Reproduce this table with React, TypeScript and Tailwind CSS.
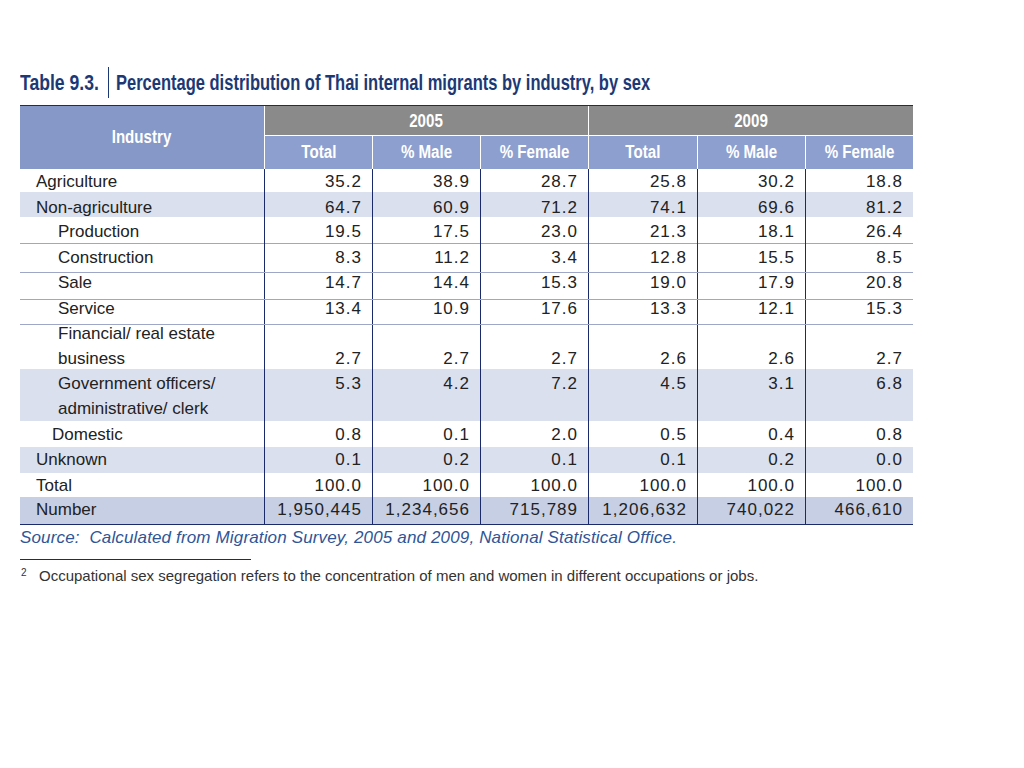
import React from 'react';

type Row = {
  label: string[];
  indent: string;
  values: string[];
  rowClass: string;
  textShift: string;
  numOnSecondLine?: boolean;
};

const rows: Row[] = [
  { label: ['Agriculture'], indent: 'pl-[16px]', values: ['35.2', '38.9', '28.7', '25.8', '30.2', '18.8'], rowClass: 'h-[23px]', textShift: 'mt-[0px]' },
  { label: ['Non-agriculture'], indent: 'pl-[16px]', values: ['64.7', '60.9', '71.2', '74.1', '69.6', '81.2'], rowClass: 'h-[25px] bg-[#dbe0ee]', textShift: 'mt-[3px]' },
  { label: ['Production'], indent: 'pl-[38px]', values: ['19.5', '17.5', '23.0', '21.3', '18.1', '26.4'], rowClass: 'h-[27px] border-b border-[#9ea7c6]', textShift: 'mt-[2px]' },
  { label: ['Construction'], indent: 'pl-[38px]', values: ['8.3', '11.2', '3.4', '12.8', '15.5', '8.5'], rowClass: 'h-[29px] border-b border-[#9ea7c6]', textShift: 'mt-[1px]' },
  { label: ['Sale'], indent: 'pl-[38px]', values: ['14.7', '14.4', '15.3', '19.0', '17.9', '20.8'], rowClass: 'h-[27px] border-b border-[#9ea7c6]', textShift: '-mt-[3px]' },
  { label: ['Service'], indent: 'pl-[38px]', values: ['13.4', '10.9', '17.6', '13.3', '12.1', '15.3'], rowClass: 'h-[25px] border-b border-[#9ea7c6]', textShift: '-mt-[4px]' },
  { label: ['Financial/ real estate', 'business'], indent: 'pl-[38px]', values: ['2.7', '2.7', '2.7', '2.6', '2.6', '2.7'], rowClass: 'h-[44px]', textShift: '-mt-[4px]', numOnSecondLine: true },
  { label: ['Government officers/', 'administrative/ clerk'], indent: 'pl-[38px]', values: ['5.3', '4.2', '7.2', '4.5', '3.1', '6.8'], rowClass: 'h-[52px] bg-[#dbe0ee]', textShift: 'mt-[2px]' },
  { label: ['Domestic'], indent: 'pl-[32px]', values: ['0.8', '0.1', '2.0', '0.5', '0.4', '0.8'], rowClass: 'h-[26px]', textShift: 'mt-[1px]' },
  { label: ['Unknown'], indent: 'pl-[16px]', values: ['0.1', '0.2', '0.1', '0.1', '0.2', '0.0'], rowClass: 'h-[26px] bg-[#dbe0ee]', textShift: 'mt-[0px]' },
  { label: ['Total'], indent: 'pl-[16px]', values: ['100.0', '100.0', '100.0', '100.0', '100.0', '100.0'], rowClass: 'h-[24px]', textShift: 'mt-[0px]' },
  { label: ['Number'], indent: 'pl-[16px]', values: ['1,950,445', '1,234,656', '715,789', '1,206,632', '740,022', '466,610'], rowClass: 'h-[27px] bg-[#c7cfe5]', textShift: 'mt-[0px]' },
];

const cols = 'grid grid-cols-[244px_108px_108px_108px_109px_108px_108px]';

// no narrow face installed, so the condensed headings are squeezed horizontally
const Narrow = ({ children, origin = 'origin-center', scale = 'scale-x-[0.84]' }: { children: React.ReactNode; origin?: string; scale?: string }) => (
  <span className={`inline-block whitespace-nowrap ${origin} ${scale}`}>{children}</span>
);

export default function App() {
  return (
    <div className="min-h-[768px] bg-white pt-[67px] pl-[20px]">
      <div className="flex h-[31px] items-center font-['Liberation_Sans',Arial,sans-serif] text-[22px] font-bold text-[#1c3975]">
        <div className="w-[88px] shrink-0">
          <Narrow origin="origin-left" scale="scale-x-[0.8]">Table 9.3.</Narrow>
        </div>
        <span className="h-[31px] w-px shrink-0 bg-[#1c3975]" />
        <div className="ml-[7px] shrink-0">
          <Narrow origin="origin-left" scale="scale-x-[0.75]">Percentage distribution of Thai internal migrants by industry, by sex</Narrow>
        </div>
      </div>

      <div className="mt-[7px] w-[893px] border-t border-[#1b2a6b]">
        <div className={`${cols} font-['Liberation_Sans',Arial,sans-serif] text-[18px] font-bold text-white`}>
          <div className="row-span-2 flex h-[63px] items-center justify-center bg-[#8598c8]">
            <Narrow>Industry</Narrow>
          </div>
          <div className="col-span-3 flex h-[30px] items-center justify-center border-b border-l border-white bg-[#8a8a8a] pt-[1px]">
            <Narrow>2005</Narrow>
          </div>
          <div className="col-span-3 flex h-[30px] items-center justify-center border-b border-l border-white bg-[#8a8a8a] pt-[1px]">
            <Narrow>2009</Narrow>
          </div>
          {['Total', '% Male', '% Female', 'Total', '% Male', '% Female'].map((h, i) => (
            <div key={i} className="flex h-[33px] items-center justify-center border-l border-white bg-[#8d9fcf]">
              <Narrow>{h}</Narrow>
            </div>
          ))}
        </div>

        <div className="border-b border-[#1b2a6b] font-['Liberation_Sans',Arial,sans-serif] text-[17px] leading-[25px] text-[#222]">
          {rows.map((r, i) => (
            <div key={i} className={`${cols} ${r.rowClass}`}>
              <div className={`${r.indent} ${r.textShift}`}>
                {r.label.map((l, j) => (
                  <div key={j}>{l}</div>
                ))}
              </div>
              {r.values.map((v, j) => (
                <div key={j} className="border-l border-[#1b2a6b]">
                  <div className={`pr-[10px] text-right tracking-[1px] ${r.textShift}`}>
                    {r.numOnSecondLine && <div>&nbsp;</div>}
                    <div>{v}</div>
                  </div>
                </div>
              ))}
            </div>
          ))}
        </div>
      </div>

      <p className="h-[24px] whitespace-pre pt-[1px] font-['Liberation_Sans',Arial,sans-serif] text-[17px] italic leading-[24px] tracking-[0.15px] text-[#2f5597]">
        {'Source:  Calculated from Migration Survey, 2005 and 2009, National Statistical Office.'}
      </p>

      <div className="mt-[10px] h-px w-[231px] bg-[#1b2a6b]" />
      <div className="mt-[6px] flex font-['Liberation_Sans',Arial,sans-serif] text-[15px] leading-[20px] text-[#333]">
        <span className="w-[19px] pl-[1px] text-[10px] leading-[14px]">2</span>
        <span>Occupational sex segregation refers to the concentration of men and women in different occupations or jobs.</span>
      </div>
    </div>
  );
}
